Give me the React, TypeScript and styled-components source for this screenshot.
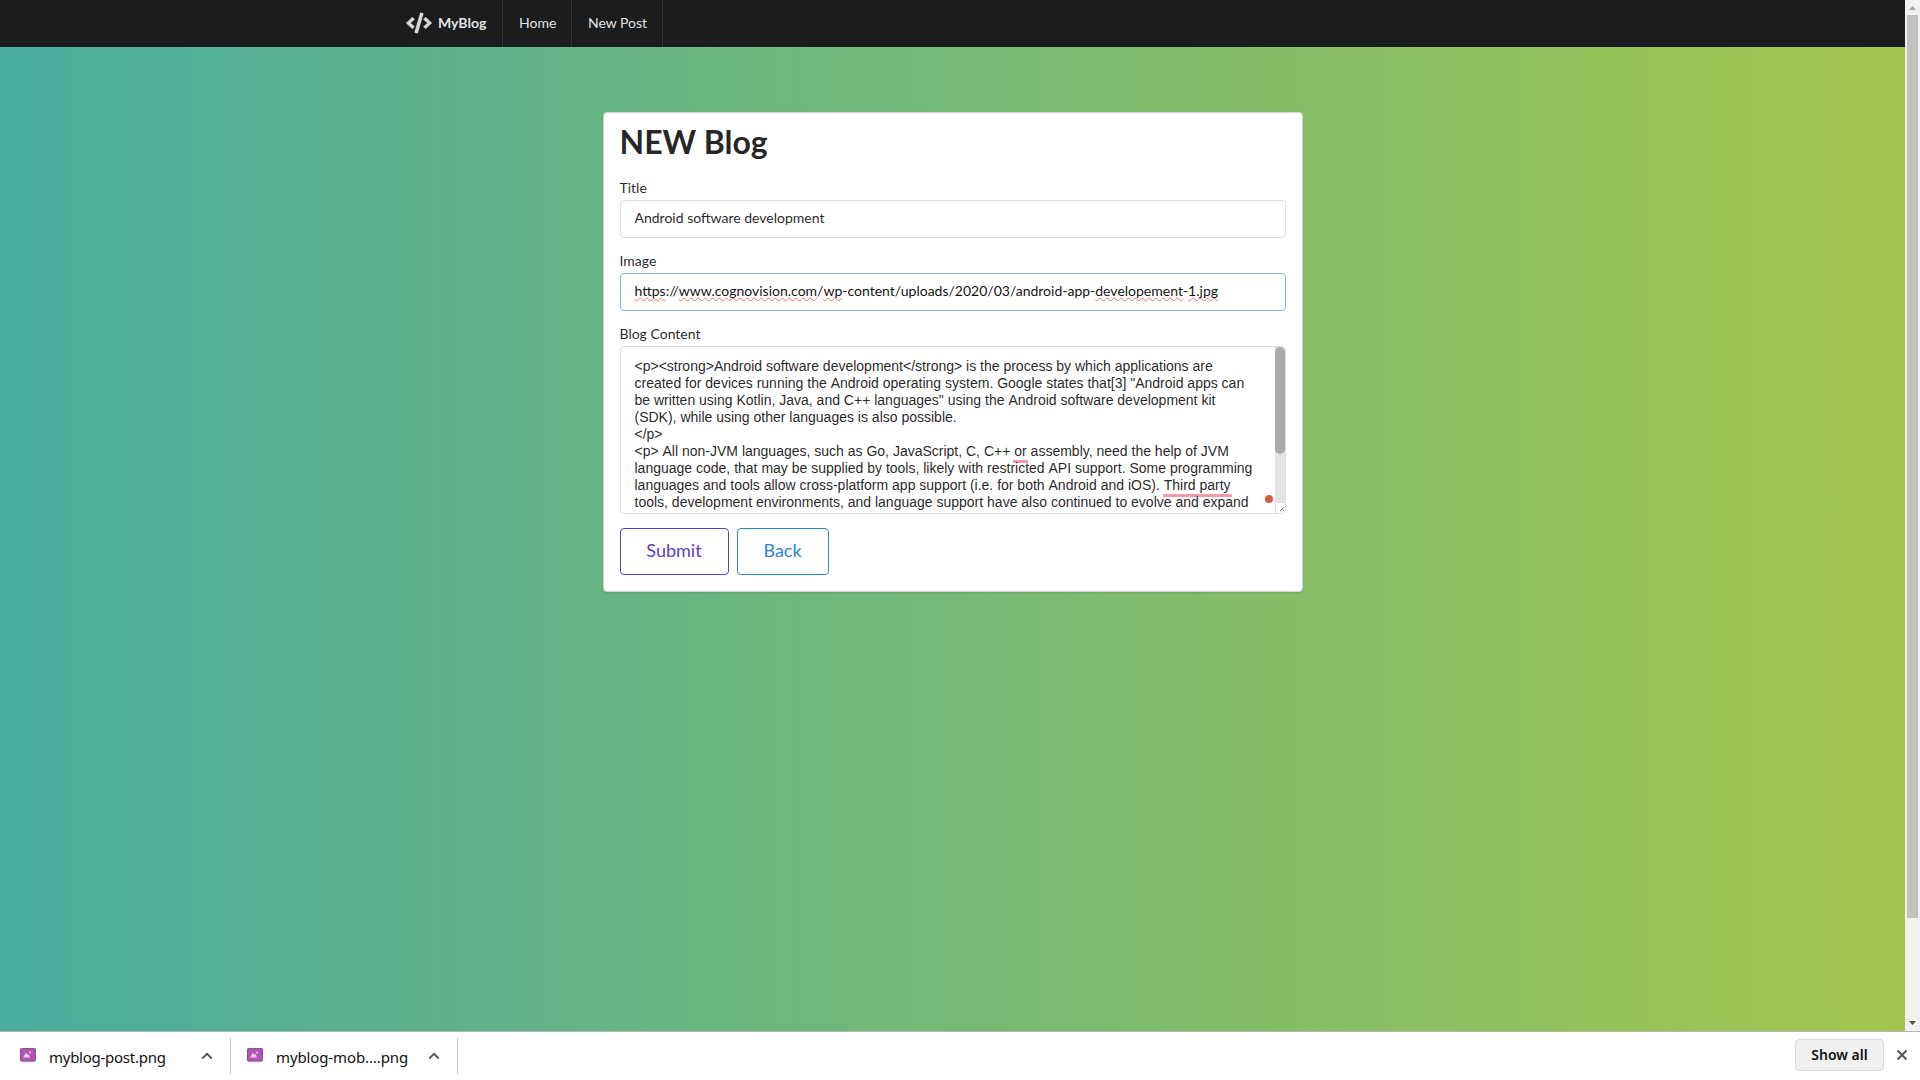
import React from 'react';
import styled, { createGlobalStyle } from 'styled-components';
import { FaCode } from 'react-icons/fa';

const GlobalStyle = createGlobalStyle`
  *, *::before, *::after { box-sizing: border-box; }
  body { margin: 0; overflow: hidden; font-family: Lato, 'Liberation Sans', sans-serif; font-size: 14px; color: rgba(0,0,0,.87); }
`;

const Screen = styled.div`
  width: 1920px;
  height: 1080px;
  display: grid;
  grid-template-rows: 1031px 49px;
`;

const Viewport = styled.div`
  display: grid;
  grid-template-columns: 1905px 15px;
`;

const Page = styled.div`
  display: flex;
  flex-direction: column;
  align-items: center;
  background: linear-gradient(to right, #4aad9f, #a2c64d);
`;

const Menu = styled.nav`
  align-self: stretch;
  height: 47px;
  flex: none;
  display: flex;
  padding-left: 389px;
  background: #1b1c1d;
`;

const MenuItem = styled.a<{ $width: number; $header?: boolean }>`
  width: ${(p) => p.$width}px;
  padding: 0 0 2px 16px;
  display: flex;
  align-items: center;
  border-right: 1px solid #323334;
  color: rgba(255, 255, 255, 0.9);
  font-weight: ${(p) => (p.$header ? 700 : 400)};
  line-height: 17px;
  white-space: nowrap;
  svg { width: 26px; height: 22px; margin: 0 6px 0 1px; color: #d6d6d6; }
`;

const Segment = styled.main`
  width: 700px;
  height: 480px;
  margin-top: 65px;
  padding: 9px 16px 16px;
  border: 1px solid #d4d4d5;
  border-radius: 4px;
  background: #fff;
  box-shadow: 0 1px 2px rgba(34, 36, 38, 0.15);
`;

const Heading = styled.h1`
  margin: 0 0 17px;
  height: 40px;
  line-height: 40px;
  font-size: 32px;
  font-weight: 700;
`;

const Field = styled.div`
  height: 73px;
`;

const Label = styled.label`
  display: block;
  height: 21px;
  line-height: 18px;
`;

const Input = styled.div<{ $focus?: boolean }>`
  height: 38px;
  padding: 0 14px;
  line-height: 34px;
  border: 1px solid ${(p) => (p.$focus ? '#85b7d9' : 'rgba(34,36,38,.15)')};
  border-radius: 4px;
  color: ${(p) => (p.$focus ? 'rgba(0,0,0,.95)' : 'rgba(0,0,0,.87)')};
`;

const Misspelt = styled.span`
  text-decoration: underline wavy #f0705c 1px;
  text-decoration-skip-ink: none;
  text-underline-offset: 1px;
`;

const Area = styled.div`
  height: 168px;
  display: grid;
  grid-template-columns: 1fr 10px;
  border: 1px solid rgba(34, 36, 38, 0.15);
  border-radius: 4px;
  overflow: hidden;
  position: relative;
`;

const AreaText = styled.div`
  padding: 11px 0 0 14px;
  font: 14px/17px 'Liberation Sans', Arial, sans-serif;
  white-space: pre;
  overflow: hidden;
`;

const Space = styled.span`
  font-kerning: none;
`;

const Grammar = styled.span`
  padding: 0 1px 1px;
  margin: 0 -1px;
  border-bottom: 3px solid #f29bab;
`;

const AreaScroll = styled.div`
  display: flex;
  flex-direction: column;
  background: #e4e4e4;
`;

const AreaThumb = styled.div`
  height: 107px;
  border-radius: 5px;
  background: #aaa;
`;

const Resizer = styled.svg`
  margin-top: auto;
  width: 10px;
  height: 10px;
  background: #fff;
  border-left: 1px solid #dcdcdc;
`;

const Alert = styled.i`
  position: absolute;
  right: 12px;
  bottom: 10px;
  width: 8px;
  height: 8px;
  border-radius: 50%;
  background: #dc5b48;
`;

const Actions = styled.div`
  display: flex;
  gap: 8px;
  margin-top: 14px;
`;

const Button = styled.button<{ $color: string; $width: number }>`
  width: ${(p) => p.$width}px;
  height: 47px;
  padding: 0 0 3px;
  font: 400 18px/18px Lato, sans-serif;
  color: ${(p) => p.$color};
  background: transparent;
  border: 1px solid ${(p) => p.$color};
  border-radius: 4px;
`;

const Scrollbar = styled.div`
  display: flex;
  flex-direction: column;
  align-items: center;
  background: #f1f1f1;
`;

const ScrollArrow = styled.svg`
  width: 15px;
  height: 15px;
  flex: none;
`;

const ScrollThumb = styled.div`
  width: 11px;
  height: 903px;
  margin-bottom: auto;
  background: #c1c1c1;
`;

const Shelf = styled.footer`
  display: flex;
  border-top: 1px solid #b3b3b3;
  background: #fff;
  font-family: 'Noto Sans', sans-serif;
  color: #111;
`;

const Download = styled.div<{ $width: number; $inset: number }>`
  width: ${(p) => p.$width}px;
  height: 36px;
  margin-top: 6px;
  padding: 0 17px 0 ${(p) => p.$inset}px;
  display: flex;
  align-items: center;
  border-right: 1px solid #c6c6c6;
`;

const FileIcon = styled.svg`
  width: 18px;
  height: 16px;
  margin: -3px 12px 0 0;
`;

const FileName = styled.span<{ $spacing: number }>`
  flex: 1;
  padding-top: 2px;
  font-size: 15px;
  line-height: 20px;
  letter-spacing: ${(p) => p.$spacing}px;
  white-space: nowrap;
`;

const Chevron = styled.svg`
  width: 12px;
  height: 8px;
`;

const ShelfEnd = styled.div`
  margin: 7px 12px 0 auto;
  display: flex;
  height: 32px;
  align-items: center;
  gap: 12px;
`;

const ShowAll = styled.button`
  width: 89px;
  height: 32px;
  padding: 0 0 1px;
  border: 1px solid #d9d9d9;
  border-radius: 4px;
  background: #f0f0f0;
  font: 600 14px 'Noto Sans', sans-serif;
  color: #111;
`;

const ImageFileIcon = () => (
  <FileIcon viewBox="0 0 18 16">
    <rect x="1" y="1.5" width="16" height="14" rx="2" fill="#d9d3da" />
    <rect x="1" y="1" width="16" height="13.5" rx="2" fill="#85568d" />
    <rect x="2" y="2" width="14" height="11.5" rx="1" fill="#b052b6" />
    <path d="M4 10.5L7 5.5L8.5 8L9.5 7L11 10.5Z" fill="#ecd2ee" />
    <rect x="10" y="4.5" width="2" height="2" fill="#dfb9e2" />
  </FileIcon>
);

const UpChevron = () => (
  <Chevron viewBox="0 0 12 8" fill="none" stroke="#555" strokeWidth="1.8">
    <path d="M1.3 6.5L6 1.8L10.7 6.5" />
  </Chevron>
);

/* Keeps the full space width before a capital A, which kerning would tighten. */
const Prose = ({ text }: { text: string }) => (
  <>
    {text.split(/ (?=A)/).map((part, i) => (
      <React.Fragment key={i}>
        {i > 0 && <Space> </Space>}
        {part}
      </React.Fragment>
    ))}
  </>
);

export default function App() {
  return (
    <>
      <GlobalStyle />
      <Screen>
        <Viewport>
          <Page>
            <Menu>
              <MenuItem $width={114} $header><FaCode />MyBlog</MenuItem>
              <MenuItem $width={69}>Home</MenuItem>
              <MenuItem $width={91}>New Post</MenuItem>
            </Menu>
            <Segment>
              <Heading>NEW Blog</Heading>
              <Field>
                <Label>Title</Label>
                <Input>Android software development</Input>
              </Field>
              <Field>
                <Label>Image</Label>
                <Input $focus>
                  <Misspelt>https</Misspelt>://<Misspelt>www.cognovision.com</Misspelt>/<Misspelt>wp</Misspelt>-content/uploads/2020/03/android-app-<Misspelt>developement</Misspelt>-<Misspelt>1.jpg</Misspelt>
                </Input>
              </Field>
              <Label>Blog Content</Label>
              <Area>
                <AreaText>
                  <Prose text={'<p><strong>Android software development</strong> is the process by which applications are\n'} />
                  <Prose text={'created for devices running the Android operating system. Google states that[3] "Android apps can\n'} />
                  <Prose text={'be written using Kotlin, Java, and C++ languages" using the Android software development kit\n'} />
                  <Prose text={'(SDK), while using other languages is also possible.\n</p>\n'} />
                  <Prose text={'<p> All non-JVM languages, such as Go, JavaScript, C, C++ '} />
                  <Grammar>or</Grammar>
                  <Prose text={' assembly, need the help of JVM\n'} />
                  <Prose text={'language code, that may be supplied by tools, likely with restricted API support. Some programming\n'} />
                  <Prose text={'languages and tools allow cross-platform app support (i.e. for both Android and iOS). '} />
                  <Grammar>Third party</Grammar>
                  <Prose text={'\ntools, development environments, and language support have also continued to evolve and expand'} />
                </AreaText>
                <AreaScroll>
                  <AreaThumb />
                  <Resizer viewBox="0 0 10 10" stroke="#555" strokeWidth="1.1">
                    <path d="M4.5 8.5L8.5 4.5M7.5 8.5L8.5 7.5" />
                  </Resizer>
                </AreaScroll>
                <Alert />
              </Area>
              <Actions>
                <Button $color="#5a3fc4" $width={109}>Submit</Button>
                <Button $color="#2f86cf" $width={92}>Back</Button>
              </Actions>
            </Segment>
          </Page>
          <Scrollbar>
            <ScrollArrow viewBox="0 0 15 15"><path d="M4 10L7.5 6L11 10Z" fill="#a3a3a3" /></ScrollArrow>
            <ScrollThumb />
            <ScrollArrow viewBox="0 0 15 15"><path d="M4 5L7.5 9L11 5Z" fill="#505050" /></ScrollArrow>
          </Scrollbar>
        </Viewport>
        <Shelf>
          <Download $width={231} $inset={19}><ImageFileIcon /><FileName $spacing={-0.26}>myblog-post.png</FileName><UpChevron /></Download>
          <Download $width={227} $inset={15}><ImageFileIcon /><FileName $spacing={-0.12}>myblog-mob….png</FileName><UpChevron /></Download>
          <ShelfEnd>
            <ShowAll>Show all</ShowAll>
            <svg width="12" height="12" viewBox="0 0 12 12" stroke="#555" strokeWidth="2"><path d="M1.5 1.5L10.5 10.5M10.5 1.5L1.5 10.5" /></svg>
          </ShelfEnd>
        </Shelf>
      </Screen>
    </>
  );
}
